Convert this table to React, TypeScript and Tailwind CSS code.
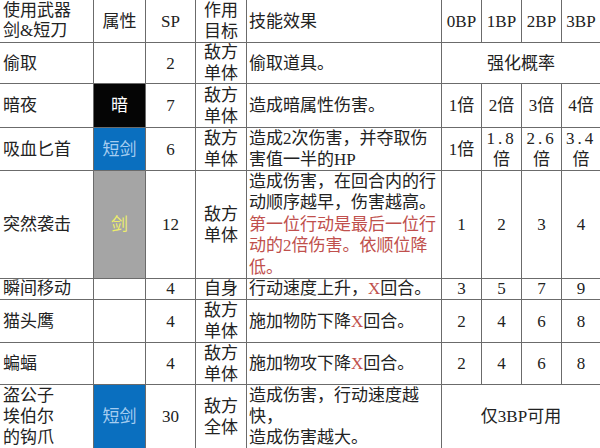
import React from "react";

const base = "bg-white text-[#222] flex items-center";
const C = base + " justify-center text-center";
const L = base + " justify-start pl-[3px]";
const E = base + " justify-start pl-[2px]";

const R = ({ children }: { children: React.ReactNode }) => (
  <span className="text-[#c0504d]">{children}</span>
);

export default function App() {
  return (
    <div
      className="w-[600px] h-[448px] overflow-hidden bg-white"
      style={{}}
    >
      <div
        className="grid grid-cols-[93px_51px_49px_50px_194px_39px_39px_39px_38px] grid-rows-[42px_40px_43px_42px_107px_20px_42px_41px_63px] gap-px bg-[#6b6b6b] text-[17px] leading-[21px] whitespace-nowrap font-['Liberation_Serif','Noto_Sans_CJK_SC',serif]"
      >
        {/* header */}
        <div className={L + " leading-[20px]"}>
          <div>
            使用武器
            <br />
            剑&amp;短刀
          </div>
        </div>
        <div className={C}>属性</div>
        <div className={C}>SP</div>
        <div className={C}>
          <div>
            作用
            <br />
            目标
          </div>
        </div>
        <div className={E}>技能效果</div>
        <div className={C}>0BP</div>
        <div className={C}>1BP</div>
        <div className={C}>2BP</div>
        <div className={C}>3BP</div>

        {/* 偷取 */}
        <div className={L}>偷取</div>
        <div className={C}></div>
        <div className={C}>2</div>
        <div className={C}>
          <div>
            敌方
            <br />
            单体
          </div>
        </div>
        <div className={E}>偷取道具。</div>
        <div className={C + " col-span-4"}>强化概率</div>

        {/* 暗夜 */}
        <div className={L}>暗夜</div>
        <div className="bg-[#050505] text-white flex items-center justify-center">暗</div>
        <div className={C}>7</div>
        <div className={C}>
          <div>
            敌方
            <br />
            单体
          </div>
        </div>
        <div className={E}>造成暗属性伤害。</div>
        <div className={C}>1倍</div>
        <div className={C}>2倍</div>
        <div className={C}>3倍</div>
        <div className={C}>4倍</div>

        {/* 吸血匕首 */}
        <div className={L}>吸血匕首</div>
        <div className="bg-[#0a6fbf] text-[#a6cdf0] flex items-center justify-center">短剑</div>
        <div className={C}>6</div>
        <div className={C}>
          <div>
            敌方
            <br />
            单体
          </div>
        </div>
        <div className={E}>
          <div>
            造成2次伤害，并夺取伤
            <br />
            害值一半的HP
          </div>
        </div>
        <div className={C}>1倍</div>
        <div className={C}>
          <div>
            <span className="tracking-[3px]">1.8</span>
            <br />倍
          </div>
        </div>
        <div className={C}>
          <div>
            <span className="tracking-[3px]">2.6</span>
            <br />倍
          </div>
        </div>
        <div className={C}>
          <div>
            <span className="tracking-[3px]">3.4</span>
            <br />倍
          </div>
        </div>

        {/* 突然袭击 */}
        <div className={L}>突然袭击</div>
        <div className="bg-[#a5a5a5] text-[#eeee6a] flex items-center justify-center">剑</div>
        <div className={C}>12</div>
        <div className={C}>
          <div>
            敌方
            <br />
            单体
          </div>
        </div>
        <div className={E + " leading-[21.5px]"}>
          <div>
            造成伤害，在回合内的行
            <br />
            动顺序越早，伤害越高。
            <br />
            <R>
              第一位行动是最后一位行
              <br />
              动的2倍伤害。依顺位降
              <br />
              低。
            </R>
          </div>
        </div>
        <div className={C}>1</div>
        <div className={C}>2</div>
        <div className={C}>3</div>
        <div className={C}>4</div>

        {/* 瞬间移动 */}
        <div className={L + " leading-[20px]"}>瞬间移动</div>
        <div className={C}></div>
        <div className={C + " leading-[20px]"}>4</div>
        <div className={C + " leading-[20px]"}>自身</div>
        <div className={E + " leading-[20px]"}>
          <span>
            行动速度上升，<R>X</R>回合。
          </span>
        </div>
        <div className={C + " leading-[20px]"}>3</div>
        <div className={C + " leading-[20px]"}>5</div>
        <div className={C + " leading-[20px]"}>7</div>
        <div className={C + " leading-[20px]"}>9</div>

        {/* 猫头鹰 */}
        <div className={L}>猫头鹰</div>
        <div className={C}></div>
        <div className={C}>4</div>
        <div className={C}>
          <div>
            敌方
            <br />
            单体
          </div>
        </div>
        <div className={E}>
          <span>
            施加物防下降<R>X</R>回合。
          </span>
        </div>
        <div className={C}>2</div>
        <div className={C}>4</div>
        <div className={C}>6</div>
        <div className={C}>8</div>

        {/* 蝙蝠 */}
        <div className={L}>蝙蝠</div>
        <div className={C}></div>
        <div className={C}>4</div>
        <div className={C}>
          <div>
            敌方
            <br />
            单体
          </div>
        </div>
        <div className={E}>
          <span>
            施加物攻下降<R>X</R>回合。
          </span>
        </div>
        <div className={C}>2</div>
        <div className={C}>4</div>
        <div className={C}>6</div>
        <div className={C}>8</div>

        {/* 盗公子 */}
        <div className={L}>
          <div>
            盗公子
            <br />
            埃伯尔
            <br />
            的钩爪
          </div>
        </div>
        <div className="bg-[#0a6fbf] text-[#a6cdf0] flex items-center justify-center">短剑</div>
        <div className={C}>30</div>
        <div className={C}>
          <div>
            敌方
            <br />
            全体
          </div>
        </div>
        <div className={E}>
          <div>
            造成伤害，行动速度越
            <br />
            快，
            <br />
            造成伤害越大。
          </div>
        </div>
        <div className={C + " col-span-4"}>仅3BP可用</div>
      </div>
    </div>
  );
}
